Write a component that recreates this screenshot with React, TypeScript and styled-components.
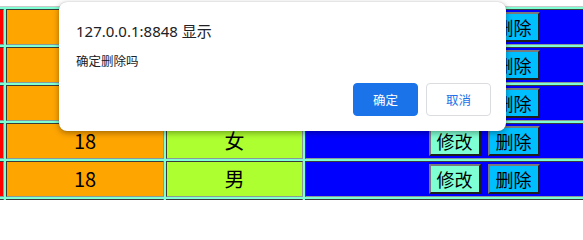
import React from 'react';
import styled, { createGlobalStyle } from 'styled-components';

const GlobalStyle = createGlobalStyle`
  html, body {
    margin: 0;
    padding: 0;
    background: #fff;
    overflow: hidden;
  }
`;

type Row = { age: number; sex: string };

const rows: Row[] = [
  { age: 18, sex: '男' },
  { age: 18, sex: '女' },
  { age: 18, sex: '男' },
  { age: 18, sex: '女' },
  { age: 18, sex: '男' },
  { age: 18, sex: '女' },
];

export default function App() {
  return (
    <Page>
      <GlobalStyle />
      <Table>
        <tbody>
          {rows.map((r, i) => (
            <tr key={i}>
              <Cell $bg="#ff0000" $w={50} />
              <Cell $bg="#ffa500" $w={156}>{r.age}</Cell>
              <Cell $bg="#adff2f" $w={135}>{r.sex}</Cell>
              <Cell $bg="#0000ff" $w={356}>
                <Actions>
                  <ActionButton $bg="#7fffd4">修改</ActionButton>
                  <ActionButton $bg="#00bfff">删除</ActionButton>
                </Actions>
              </Cell>
            </tr>
          ))}
        </tbody>
      </Table>

      <Dialog>
        <Title>127.0.0.1:8848 显示</Title>
        <Message>确定删除吗</Message>
        <Footer>
          <DialogButton $primary>确定</DialogButton>
          <DialogButton>取消</DialogButton>
        </Footer>
      </Dialog>
    </Page>
  );
}

const Page = styled.div`
  position: relative;
  width: 583px;
  height: 200px;
  overflow: hidden;
  padding-top: 6px;
  box-sizing: border-box;
`;

const Table = styled.table`
  table-layout: fixed;
  width: 717px;
  margin-left: -51px;
  border-collapse: separate;
  border-spacing: 2px;
  background: #7fffd4;
  border: 1px solid;
  border-color: #c8c8c8 #555 #555 #c8c8c8;
  font-family: "Microsoft YaHei", "Noto Sans CJK SC", sans-serif;
  font-size: 20px;
  color: #000;
`;

const Cell = styled.td<{ $bg: string; $w: number }>`
  width: ${(p) => p.$w}px;
  height: 34px;
  padding: 0;
  box-sizing: content-box;
  border: 1px solid;
  border-color: #3a3a3a #8a9a9a #8a9a9a #3a3a3a;
  background: ${(p) => p.$bg};
  text-align: center;
  vertical-align: middle;
  line-height: 34px;
`;

const Actions = styled.div`
  display: flex;
  justify-content: center;
  align-items: center;
  gap: 7px;
`;

const ActionButton = styled.button<{ $bg: string }>`
  height: 30px;
  padding: 0 6px;
  box-sizing: border-box;
  border: 2px solid;
  border-color: #7a7a7a #1e1e1e #1e1e1e #7a7a7a;
  background: ${(p) => p.$bg};
  font-family: "Microsoft YaHei", "Noto Sans CJK SC", sans-serif;
  font-size: 18px;
  line-height: 24px;
  color: #000;
`;

const Dialog = styled.div`
  position: absolute;
  left: 59px;
  top: 2px;
  width: 447px;
  height: 129px;
  box-sizing: border-box;
  padding: 19px 15px 15px 17px;
  display: flex;
  flex-direction: column;
  background: #fff;
  border-radius: 8px;
  box-shadow: 0 2px 6px rgba(0, 0, 0, 0.35), 0 0 1px rgba(0, 0, 0, 0.25);
  font-family: "Segoe UI", "Noto Sans", "Noto Sans CJK SC", sans-serif;
  color: #202124;
`;

const Title = styled.div`
  font-size: 15px;
  line-height: 20px;
`;

const Message = styled.div`
  margin-top: 11px;
  font-size: 12.5px;
  line-height: 18px;
  font-family: "Microsoft YaHei", "Noto Sans CJK SC", sans-serif;
`;

const Footer = styled.div`
  margin-top: auto;
  display: flex;
  justify-content: flex-end;
  gap: 8px;
`;

const DialogButton = styled.button<{ $primary?: boolean }>`
  height: 33px;
  padding: 0 19px;
  box-sizing: border-box;
  border-radius: 4px;
  border: 1px solid ${(p) => (p.$primary ? '#1a73e8' : '#dadce0')};
  background: ${(p) => (p.$primary ? '#1a73e8' : '#fff')};
  color: ${(p) => (p.$primary ? '#fff' : '#1a73e8')};
  font-family: "Microsoft YaHei", "Noto Sans CJK SC", sans-serif;
  font-size: 12.5px;
  line-height: 31px;
`;
